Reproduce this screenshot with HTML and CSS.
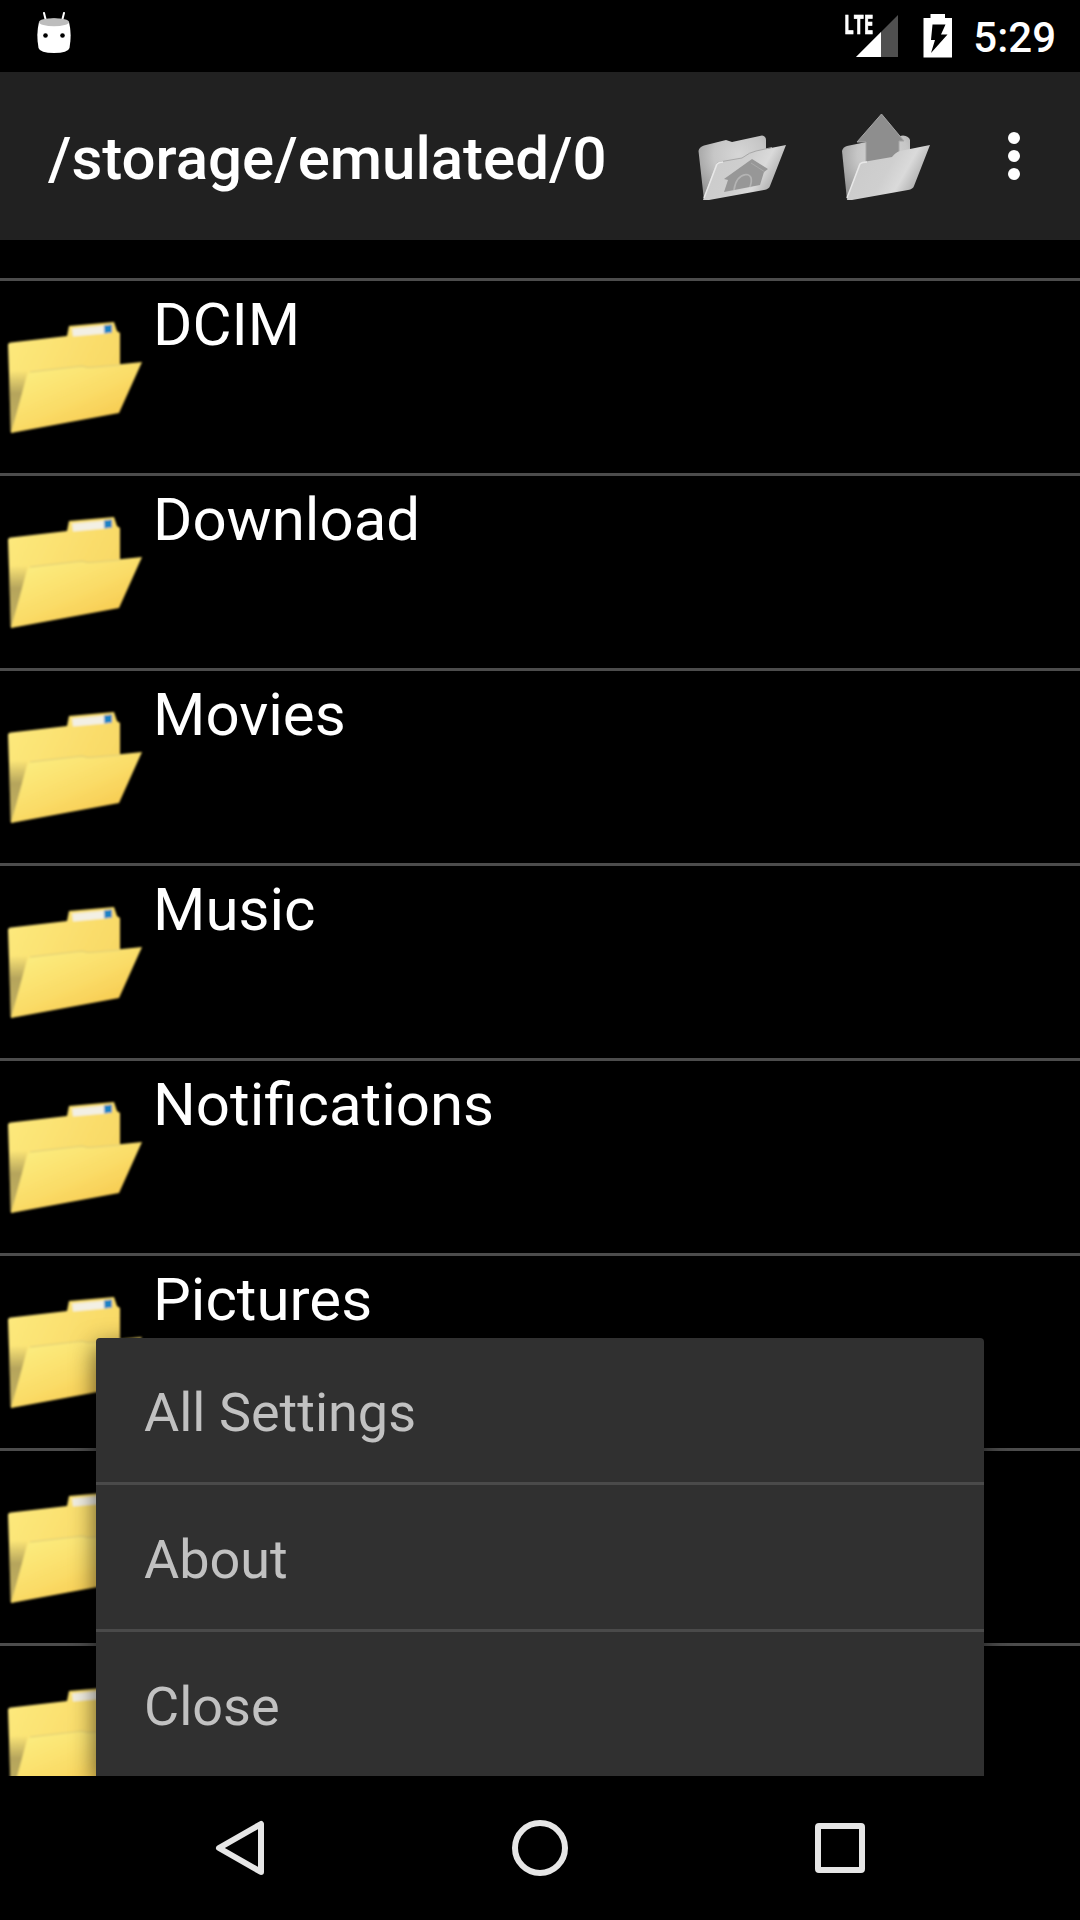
FILE: index.html
```html
<!DOCTYPE html>
<html lang="en">
<head>
<meta charset="utf-8">
<title>/storage/emulated/0</title>
<link rel="stylesheet" href="styles.css">
</head>
<body>
<svg class="defs" width="0" height="0" aria-hidden="true">
  <defs>
    <linearGradient id="back" x1="0" y1="0" x2="1" y2="0.5"><stop offset="0" stop-color="#fdea7e"/><stop offset="1" stop-color="#f8d763"/></linearGradient>
    <linearGradient id="front" x1="0.1" y1="0.1" x2="0.8" y2="0.95"><stop offset="0" stop-color="#fced80"/><stop offset="0.5" stop-color="#fadd69"/><stop offset="1" stop-color="#f7c64a"/></linearGradient>
    <linearGradient id="shade" x1="0" y1="0" x2="0" y2="1"><stop offset="0.2" stop-color="#8f824e" stop-opacity="0"/><stop offset="0.5" stop-color="#8f824e" stop-opacity="0.65"/><stop offset="1" stop-color="#8f824e" stop-opacity="0.5"/></linearGradient>
    <radialGradient id="gback" cx="0.6" cy="0.3" r="0.75"><stop offset="0" stop-color="#d6d6d6"/><stop offset="0.5" stop-color="#c6c6c6"/><stop offset="1" stop-color="#959595"/></radialGradient>
    <linearGradient id="gfront" x1="0.2" y1="0" x2="1" y2="0.3"><stop offset="0" stop-color="#cbcbcb"/><stop offset="0.5" stop-color="#cfcfcf"/><stop offset="0.75" stop-color="#dadada"/><stop offset="1" stop-color="#b0b0b0"/></linearGradient>
    <filter id="soft" x="-5%" y="-5%" width="110%" height="110%"><feGaussianBlur stdDeviation="1"/></filter>
  </defs>
  <symbol id="folder" viewBox="0 0 144 144">
    <g filter="url(#soft)">
      <path d="M8 50 Q8 48 11 47.500L67 41L69 31L114 27L117 36L120 38V90L11 138Z" fill="url(#back)"/>
      <path d="M72 33.500L111 30V38L73 41.500Z" fill="#f3f0e4"/>
      <path d="M104 30.500L112 29.500V37.500L104.500 38.500Z" fill="#1b82c4"/>
      <path d="M9 60H32L12 137H10Z" fill="url(#shade)"/>
      <path d="M11 138L28 79Q29 77 32 76L82 71L88 72.500L142 67L119 118Z" fill="url(#front)"/>
      <path d="M30 77L82 71L88 72.500L120 70" fill="none" stroke="#dccb76" stroke-width="1.200"/>
    </g>
  </symbol>
</svg>
<header class="status">
  <svg class="droid" width="36" height="42" viewBox="0 0 36 42">
    <path d="M8 1L10 9M28 1L26 9" stroke="#fff" stroke-width="2" stroke-linecap="round"/>
    <path d="M3 10Q18 3 33 10Q36 22 33.500 36Q32 41 18 41Q4 41 2.500 36Q0 22 3 10Z" fill="#fff"/>
    <ellipse cx="18" cy="10.200" rx="15" ry="4" fill="#bdbdbd"/>
    <circle cx="9.500" cy="23.500" r="2.300"/><circle cx="26.500" cy="23.500" r="2.300"/>
  </svg>
  <div class="status-right">
    <div class="signal">
      <svg width="54" height="44" viewBox="0 0 54 44"><path d="M53 1V43H11Z" fill="#505050"/><path d="M36 18V43H11Z" fill="#fff"/></svg>
      <span class="lte">LTE</span>
    </div>
    <svg class="battery" width="30" height="44" viewBox="0 0 30 44"><path d="M7.500 0H22V4H29V43.500H0.500V4H7.500Z" fill="#fff"/><path d="M9.500 10.500H22.500L18 20.500H24.500L8 39L12 26H8Z"/></svg>
    <span class="clock">5:29</span>
  </div>
</header>
<div class="appbar">
  <h1 class="title">/storage/emulated/0</h1>
  <svg class="action" width="144" height="96" viewBox="0 0 144 96">
    <path d="M26.500 24Q27 20 32 18.500L54 13L60 15L90 8.500Q94 9 94 13V40L32 73Z" fill="url(#gback)"/>
    <path d="M31 73L44 37Q46 35 50 34.500L70 31Q78 25 84 24L114 18L98 59Q97 62 92 63L37 73Z" fill="url(#gfront)"/>
    <path d="M44 37Q46 35 50 34.500L70 31Q78 25 84 24L100 20.500" fill="none" stroke="#a8a8a8"/>
    <path d="M32 71L45 37Q47 35 51 35" fill="none" stroke="#e8e8e8" stroke-width="1.500"/>
    <path d="M52 52L80 32L96 42L92 45L88 58L52 65L56 53Z" fill="#979797"/>
    <path d="M62 63Q64 49 74 47.500Q82 48 78 60" fill="none" stroke="#b4b4b4" stroke-width="1.700"/>
    <path d="M79 36L93 45" fill="none" stroke="#aaa" stroke-width="1"/>
  </svg>
  <svg class="action" width="144" height="96" viewBox="0 0 144 96">
    <path d="M26 24Q27 20 31 19L60 13L87 8.500Q93 9 94 13V40L31 73Z" fill="url(#gback)"/>
    <path d="M65.500 -13L88 14H83V36H50V15H41Z" fill="#8e8e8e" stroke="#a6a6a6"/>
    <path d="M31 73L43 37Q45 35 50 34.500L76 30Q80 25 84 24L114 18L98 59Q97 62 92 63L36 73Z" fill="url(#gfront)"/>
    <path d="M31 71L44 37Q46 35 51 35" fill="none" stroke="#e8e8e8" stroke-width="1.500"/>
  </svg>
  <svg class="more" width="24" height="60" viewBox="0 0 24 60" fill="#fff"><circle cx="12" cy="12" r="6"/><circle cx="12" cy="30" r="6"/><circle cx="12" cy="48" r="6"/></svg>
</div>
<main class="content">
  <ul class="files">
    <li class="file"><svg class="icon"><use href="#folder"/></svg><span>DCIM</span></li>
    <li class="file"><svg class="icon"><use href="#folder"/></svg><span>Download</span></li>
    <li class="file"><svg class="icon"><use href="#folder"/></svg><span>Movies</span></li>
    <li class="file"><svg class="icon"><use href="#folder"/></svg><span>Music</span></li>
    <li class="file"><svg class="icon"><use href="#folder"/></svg><span>Notifications</span></li>
    <li class="file"><svg class="icon"><use href="#folder"/></svg><span>Pictures</span></li>
    <li class="file"><svg class="icon"><use href="#folder"/></svg></li>
    <li class="file"><svg class="icon"><use href="#folder"/></svg></li>
  </ul>
  <div class="menu">
    <div class="menu-item">All Settings</div>
    <div class="menu-item">About</div>
    <div class="menu-item">Close</div>
  </div>
</main>
<nav class="navbar">
  <svg width="60" height="60" viewBox="0 0 60 60"><path d="M51 6V54L9 30Z"/></svg>
  <svg width="60" height="60" viewBox="0 0 60 60"><circle cx="30" cy="30" r="25"/></svg>
  <svg width="60" height="60" viewBox="0 0 60 60"><rect x="8" y="8" width="44" height="44" rx="1"/></svg>
</nav>
</body>
</html>
```
FILE: styles.css
```css
* { box-sizing: border-box; }
body {
  margin: 0;
  width: 1080px;
  height: 1920px;
  display: flex;
  flex-direction: column;
  overflow: hidden;
  background: #000;
  color: #fff;
  font-family: Roboto, sans-serif;
}
svg { display: block; flex: none; }
.defs { position: absolute; }
.status {
  height: 72px;
  flex: none;
  display: flex;
  justify-content: space-between;
  padding: 12px 24px 0 36px;
}
.status-right { display: flex; }
.signal { position: relative; margin: 2px 24px 0 0; }
.lte {
  position: absolute;
  left: -1px;
  top: -3px;
  font: 700 26px/26px "Open Sans", sans-serif;
  -webkit-text-stroke: 0.6px #fff;
  transform: scaleX(0.66);
  transform-origin: left;
}
.battery { margin: 2px 20px 0 0; }
.clock { font-size: 42px; line-height: 51px; font-weight: 500; }
.appbar {
  height: 168px;
  flex: none;
  display: flex;
  align-items: center;
  background: #212121;
  padding: 0 54px 0 48px;
}
.title { margin: 0; flex: 1; font-size: 60px; line-height: 72px; font-weight: 500; padding-top: 6px; }
.action { overflow: visible; margin-top: 38px; }
.more { margin-left: 42px; }
.content { height: 1536px; flex: none; position: relative; overflow: hidden; }
.files { list-style: none; margin: 0; padding: 38px 0 0; }
.file {
  height: 195px;
  border-top: 3px solid #4c4c4c;
  display: flex;
  font-size: 60px;
  line-height: 70px;
}
.file span { padding: 9px 0 0 9px; }
.icon { width: 144px; height: 144px; margin-top: 14px; }
.menu {
  position: absolute;
  left: 96px;
  top: 1098px;
  width: 888px;
  height: 438px;
  border-radius: 4px 4px 0 0;
  background: #303030;
  box-shadow: 0 8px 24px rgba(0, 0, 0, 0.65);
}
.menu-item {
  height: 144px;
  padding: 0 48px;
  font-size: 54px;
  line-height: 150px;
  color: #c1c1c1;
}
.menu-item + .menu-item { height: 147px; border-top: 3px solid #4a4a4a; }
.navbar {
  height: 144px;
  display: flex;
  justify-content: center;
  align-items: center;
  gap: 240px;
}
.navbar svg { fill: none; stroke: #e6e6e6; stroke-width: 6; stroke-linejoin: round; }
```
